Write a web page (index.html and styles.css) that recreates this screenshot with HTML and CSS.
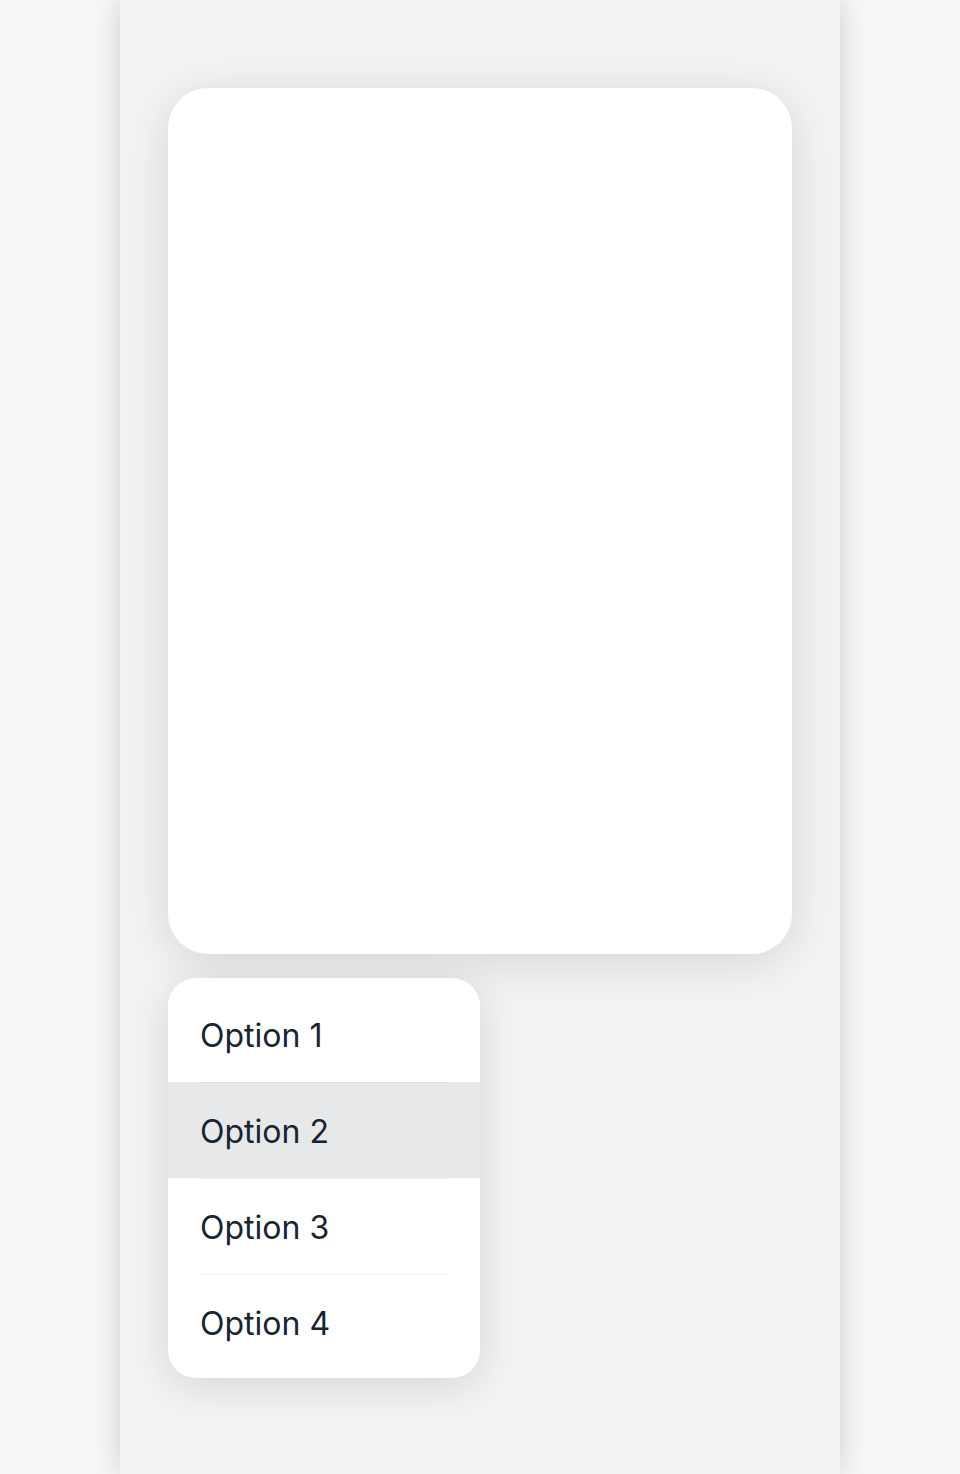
FILE: index.html
```html
<!DOCTYPE html>
<html>
<head>
<meta charset="utf-8">
<link rel="stylesheet" href="styles.css">
</head>
<body>
<div class="column">
  <div class="card"></div>
  <div class="menu">
    <div class="item">Option 1</div>
    <div class="item active">Option 2</div>
    <div class="item">Option 3</div>
    <div class="item">Option 4</div>
  </div>
</div>
</body>
</html>
```
FILE: styles.css
```css
html, body {
  margin: 0;
  padding: 0;
  background: #f7f7f7;
}
.column {
  width: 720px;
  margin: 0 auto;
  min-height: 1474px;
  box-sizing: border-box;
  padding: 88px 48px 0;
  background: #f1f3f5;
  box-shadow: 0 0 28px rgba(0, 0, 0, 0.17);
  display: flex;
  flex-direction: column;
  gap: 24px;
}
.card {
  height: 866px;
  background: #ffffff;
  border-radius: 40px;
  box-shadow: 0 8px 48px rgba(0, 0, 0, 0.12);
}
.menu {
  width: 312px;
  background: #ffffff;
  border-radius: 28px;
  padding: 8px 0;
  box-shadow: 0 8px 44px rgba(0, 0, 0, 0.12);
  display: flex;
  flex-direction: column;
  overflow: hidden;
}
.item {
  height: 96px;
  box-sizing: border-box;
  padding: 3px 32px 0;
  display: flex;
  align-items: center;
  font-family: Inter, "Noto Sans", sans-serif;
  font-size: 32px;
  color: #182431;
}
.item + .item {
  background-image: linear-gradient(rgba(0, 0, 0, 0.05), rgba(0, 0, 0, 0.05));
  background-repeat: no-repeat;
  background-position: 32px 0;
  background-size: calc(100% - 64px) 1px;
}
.item.active {
  background-color: #e7e8ea;
}
```
